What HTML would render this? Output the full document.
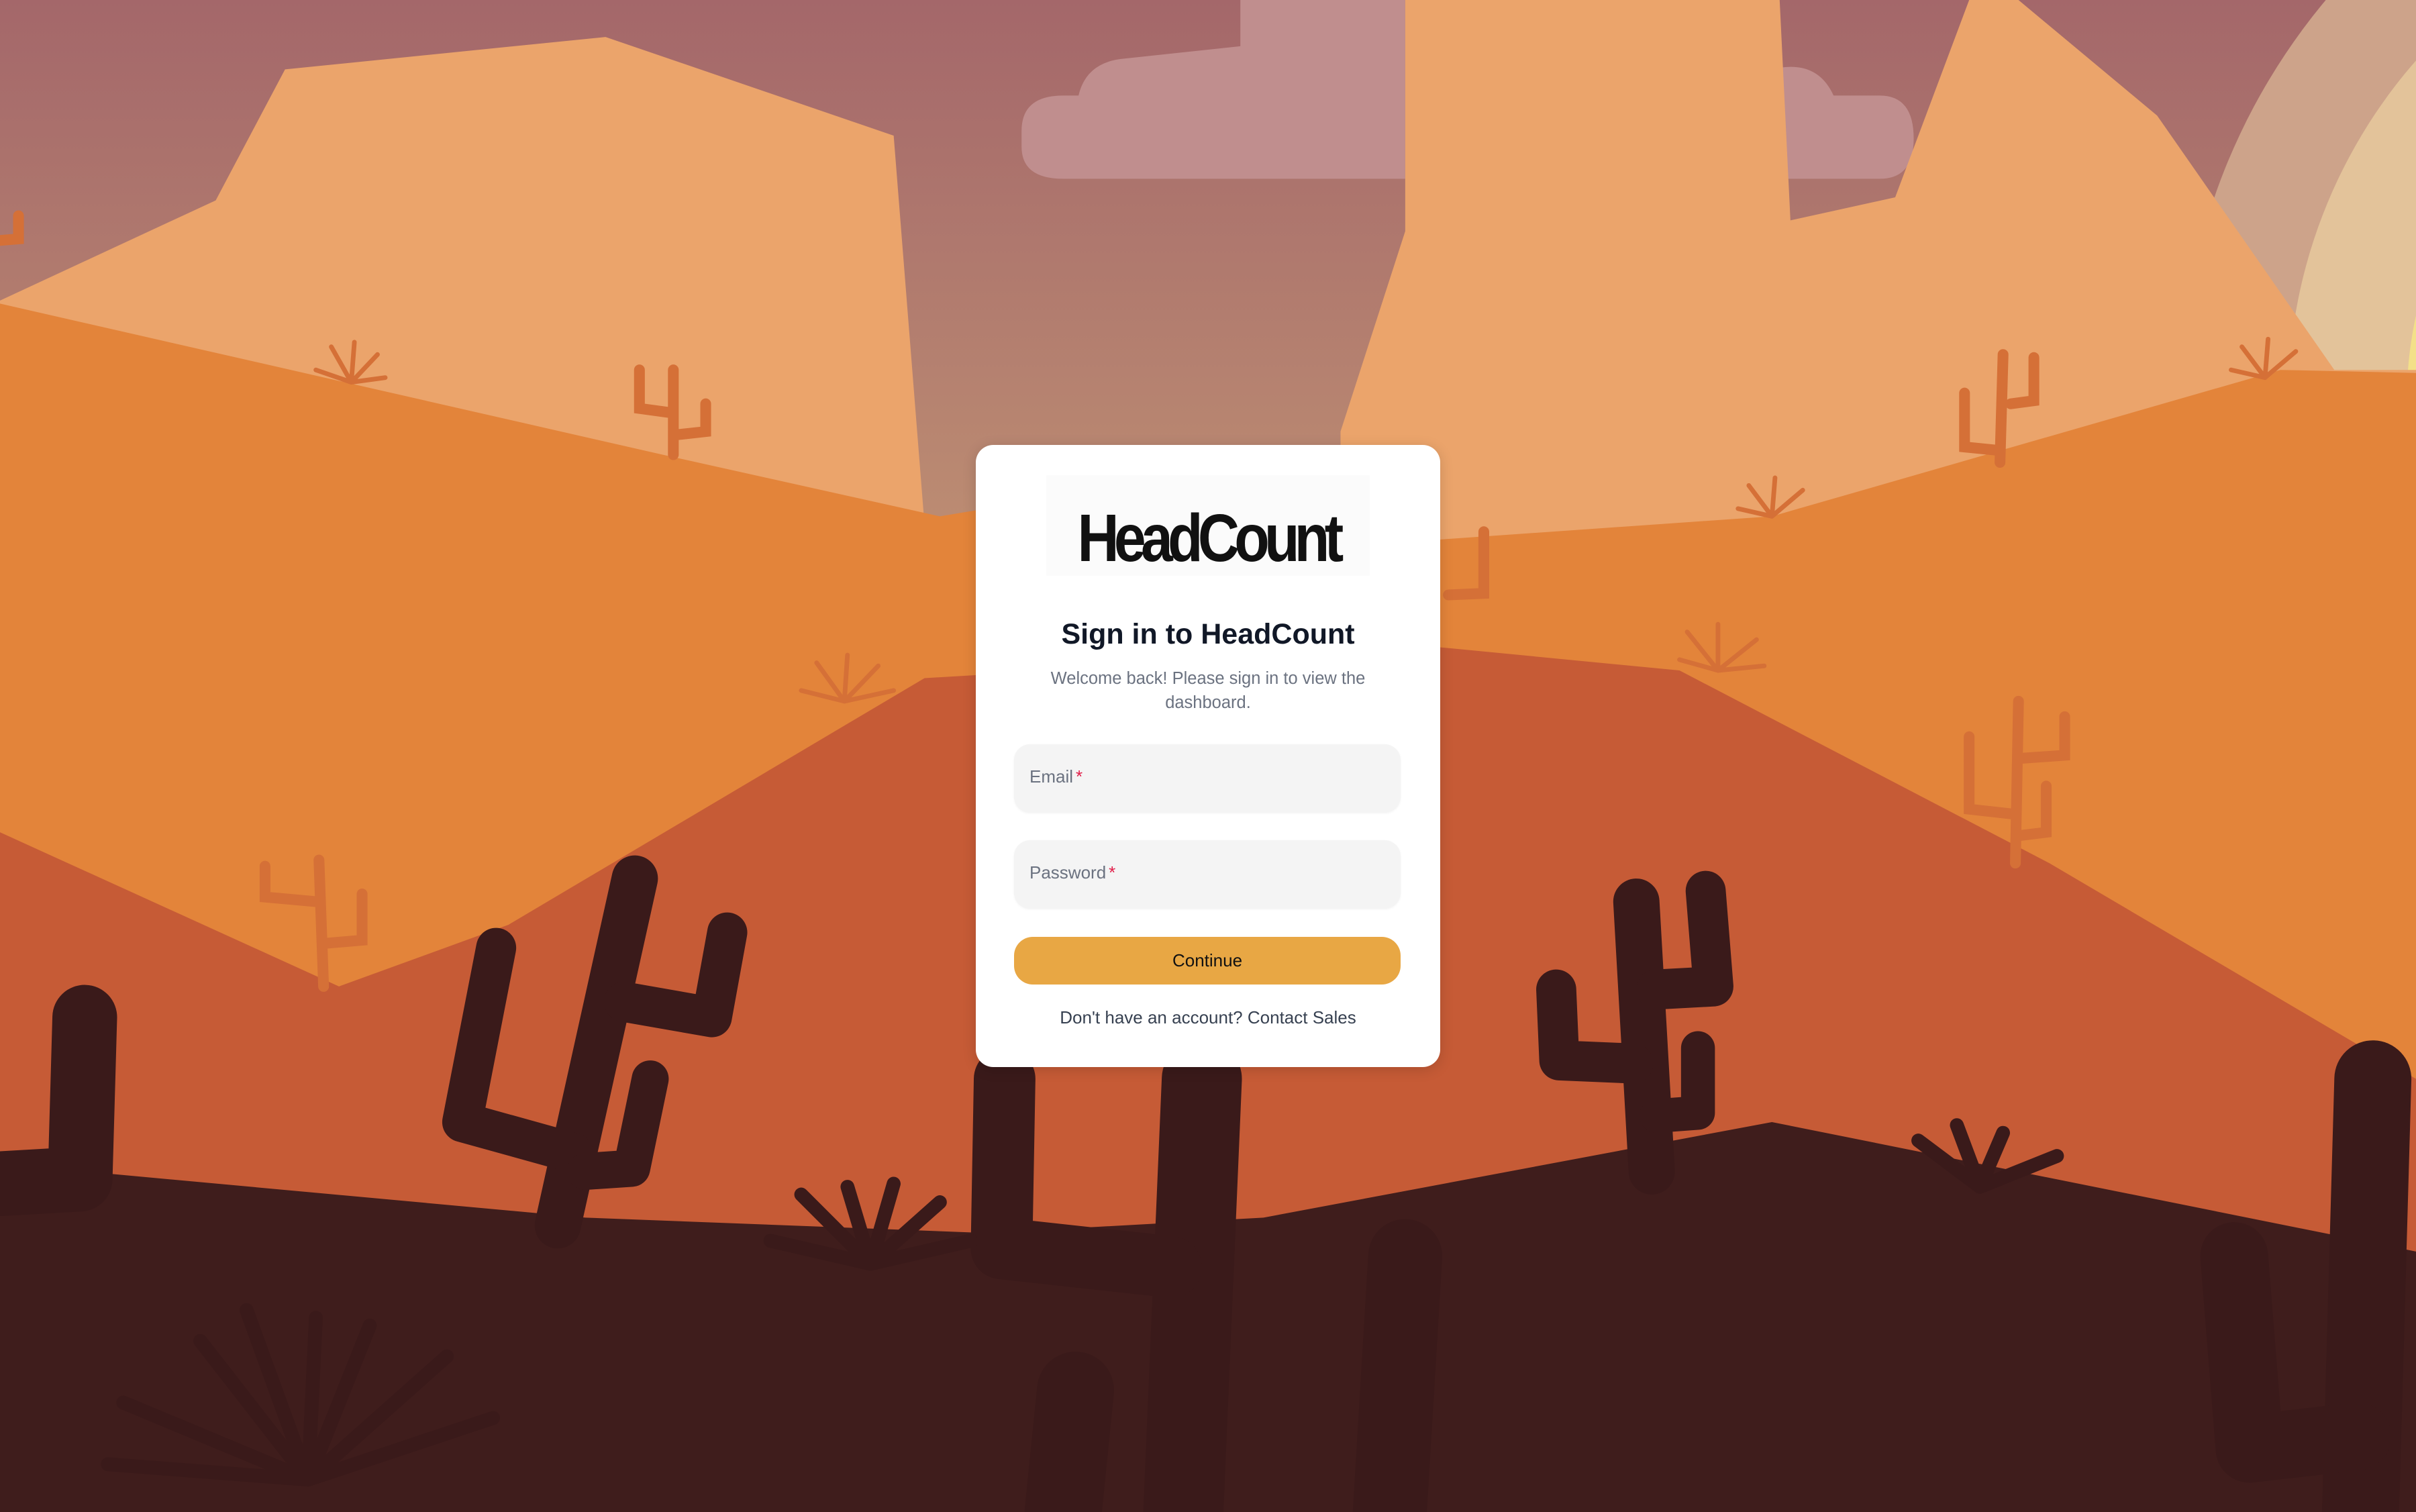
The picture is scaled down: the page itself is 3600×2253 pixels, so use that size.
<!DOCTYPE html>
<html><head><meta charset="utf-8"><style>
html,body{margin:0;padding:0;width:3600px;height:2253px;overflow:hidden;font-family:"Liberation Sans",Arial,sans-serif}
svg.bg{position:absolute;left:0;top:0;width:3600px;height:2253px}
.card{position:absolute;left:1454px;top:663px;width:692px;height:927px;background:#fff;border-radius:26px;box-shadow:0 4px 20px rgba(0,0,0,.15)}
.abs{position:absolute;left:0;width:692px;text-align:center}
.inp{position:absolute;left:57px;width:576px;height:102px;background:#f4f4f4;border-radius:24px;box-shadow:0 1px 3px rgba(0,0,0,.05)}
.inp span{position:absolute;left:23px;top:33px;font-size:26px;color:#6b7280}
.inp b{color:#e11d48;font-weight:normal;margin-left:4px}
</style></head><body>
<svg class="bg" viewBox="0 0 1568 981" preserveAspectRatio="none">
<defs><linearGradient id="sky" x1="0" y1="0" x2="0" y2="1"><stop offset="0" stop-color="#a4676a"/><stop offset="0.35" stop-color="#bc8c72"/><stop offset="1" stop-color="#bc8c72"/></linearGradient></defs>
<rect width="1568" height="981" fill="url(#sky)"/>
<circle cx="1820" cy="260" r="405" fill="#cda38a"/>
<circle cx="1820" cy="260" r="335" fill="#e3c39a"/>
<circle cx="1820" cy="260" r="258" fill="#f3e089"/>
<path d="M663,85 Q663,62 690,62 L700,62 Q705,40 730,38 L805,30 L805,0 L912,0 L912,116 L690,116 Q663,116 663,95Z" fill="#c08e8e"/>
<path d="M1155,44 Q1180,40 1190,62 L1220,62 Q1242,62 1242,90 Q1242,116 1220,116 L1155,116Z" fill="#c08e8e"/>
<polygon points="0,195 140,130 185,45 393,24 580,88 600,340 0,340" fill="#eba46b"/>
<polygon points="870,280 912,150 912,0 1155,0 1162,143 1230,128 1278,0 1310,0 1400,75 1515,240 1568,240 1568,420 870,420" fill="#eba46b"/>
<polygon points="0,197 430,295 610,335 700,320 700,981 0,981" fill="#e3843a"/>
<polygon points="700,360 935,350 1150,335 1480,240 1568,242 1568,981 700,981" fill="#e3843a"/>
<polygon points="0,540 220,640 330,600 600,440 935,420 1090,435 1330,560 1568,700 1568,981 0,981" fill="#c65b36"/>
<polygon points="0,755 380,790 640,800 820,790 1150,728 1568,812 1568,981 0,981" fill="#3f1d1c"/>
<g stroke="#d57037" stroke-width="7" stroke-linecap="round" fill="none">
<path d="M437,240 L437,295 M415,240 L415,265 L437,268 M458,262 L458,280 L440,282"/>
<path d="M207,558 L210,640 M172,562 L172,582 L205,585 M235,580 L235,610 L212,612"/>
<path d="M1300,230 L1298,300 M1275,255 L1275,290 L1295,292 M1320,232 L1320,260 L1305,262"/>
<path d="M1310,455 L1308,560 M1278,478 L1278,525 L1305,528 M1340,465 L1340,490 L1312,492 M1328,510 L1328,540 L1312,542"/>
<path d="M963,345 L963,385 L940,386 M12,140 L12,155 L0,156"/>
</g>
<g stroke="#d57037" stroke-width="3" stroke-linecap="round" fill="none">
<path d="M228,248 L215,225 M228,248 L230,222 M228,248 L245,230 M228,248 L205,240 M228,248 L250,245"/>
<path d="M548,455 L530,430 M548,455 L550,425 M548,455 L570,432 M548,455 L520,448 M548,455 L580,448"/>
<path d="M1470,245 L1455,225 M1470,245 L1472,220 M1470,245 L1490,228 M1470,245 L1448,240"/>
<path d="M1150,335 L1135,315 M1150,335 L1152,310 M1150,335 L1170,318 M1150,335 L1128,330"/>
<path d="M1115,435 L1095,410 M1115,435 L1115,405 M1115,435 L1140,415 M1115,435 L1090,428 M1115,435 L1145,432"/>
</g>
<g stroke="#3a1a1a" stroke-linecap="round" stroke-linejoin="round" fill="none">
<path d="M55,660 L52,765 L0,768" stroke-width="42"/>
<path d="M412,570 L362,795" stroke-width="30"/>
<path d="M322,615 L300,728 L372,748" stroke-width="26"/>
<path d="M472,605 L462,660 L405,650" stroke-width="26"/>
<path d="M422,700 L410,758 L380,760" stroke-width="24"/>
<path d="M780,700 L768,981" stroke-width="52"/>
<path d="M652,700 L650,810 L760,822" stroke-width="40"/>
<path d="M1062,585 L1072,760" stroke-width="30"/>
<path d="M1107,578 L1112,640 L1075,642" stroke-width="26"/>
<path d="M1010,642 L1012,688 L1060,690" stroke-width="26"/>
<path d="M1102,680 L1102,722 L1075,724" stroke-width="22"/>
<path d="M1540,700 L1532,981" stroke-width="50"/>
<path d="M1450,815 L1460,940 L1530,932" stroke-width="44"/>
<path d="M912,815 L902,981" stroke-width="48"/>
<path d="M698,902 L690,981" stroke-width="50"/>
</g>
<g stroke="#3a1a1a" stroke-width="9" stroke-linecap="round" fill="none">
<path d="M200,960 L130,870 M200,960 L160,850 M200,960 L205,855 M200,960 L240,860 M200,960 L290,880 M200,960 L80,910 M200,960 L320,920 M200,960 L70,950"/>
<path d="M565,820 L520,775 M565,820 L550,770 M565,820 L580,768 M565,820 L610,780 M565,820 L500,805 M565,820 L630,805"/>
<path d="M1285,770 L1245,740 M1285,770 L1270,730 M1285,770 L1300,735 M1285,770 L1335,750"/>
</g>
</svg>
<div class="card">
<div style="position:absolute;left:105px;top:45px;width:482px;height:150px;background:#fbfbfb"></div>
<div class="abs" style="top:84px;font-size:100px;font-weight:bold;letter-spacing:-9px;line-height:110px;color:#111;transform:scaleX(0.86)">HeadCount</div>
<div class="abs" style="top:257px;font-size:43px;font-weight:bold;color:#111827;line-height:50px">Sign in to HeadCount</div>
<div class="abs" style="top:330px;left:100px;width:492px;font-size:25.5px;line-height:36px;color:#6b7280">Welcome back! Please sign in to view the dashboard.</div>
<div class="inp" style="top:446px"><span>Email<b>*</b></span></div>
<div class="inp" style="top:589px"><span>Password<b>*</b></span></div>
<div style="position:absolute;left:57px;top:733px;width:576px;height:71px;background:#e8a744;border-radius:28px;text-align:center;line-height:71px;font-size:26px;color:#111">Continue</div>
<div class="abs" style="top:835px;font-size:26px;color:#374151;line-height:36px">Don't have an account? Contact Sales</div>
</div>
</body></html>
